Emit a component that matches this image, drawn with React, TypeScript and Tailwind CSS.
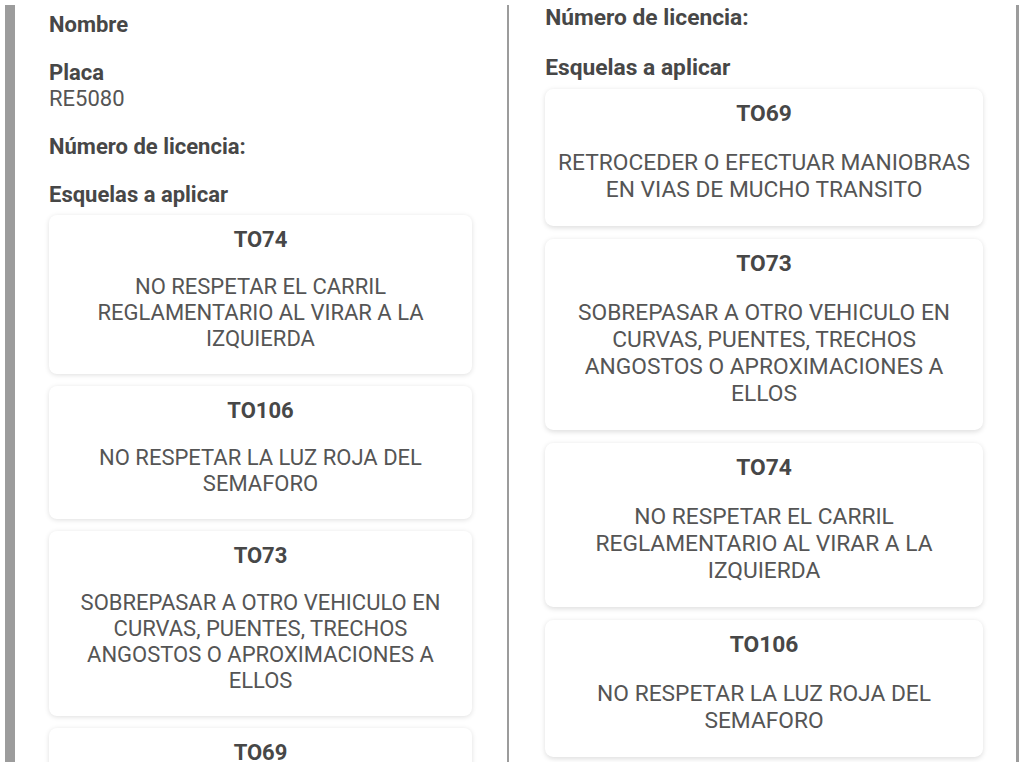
import React from "react";

type Ticket = { code: string; lines: string[] };

const T74: Ticket = { code: "TO74", lines: ["NO RESPETAR EL CARRIL", "REGLAMENTARIO AL VIRAR A LA", "IZQUIERDA"] };
const T106: Ticket = { code: "TO106", lines: ["NO RESPETAR LA LUZ ROJA DEL", "SEMAFORO"] };
const T73: Ticket = {
  code: "TO73",
  lines: ["SOBREPASAR A OTRO VEHICULO EN", "CURVAS, PUENTES, TRECHOS", "ANGOSTOS O APROXIMACIONES A", "ELLOS"],
};
const T69: Ticket = { code: "TO69", lines: ["RETROCEDER O EFECTUAR MANIOBRAS", "EN VIAS DE MUCHO TRANSITO"] };

function Field({ label, value }: { label: string; value?: string }) {
  return (
    <div className="mb-[22px]">
      <div className="font-bold text-[#474747] leading-[26px]">{label}</div>
      {value ? <div className="text-[#555555] leading-[26px]">{value}</div> : null}
    </div>
  );
}

function Card({ t }: { t: Ticket }) {
  return (
    <div className="bg-white rounded-[8px] shadow-[0_1px_5px_rgba(0,0,0,0.13)] pt-[12px] pb-[22px] px-2 text-center">
      <div className="font-bold text-[#474747] leading-[26px]">{t.code}</div>
      <div className="mt-[21px] text-[#555555] leading-[26px]">
        {t.lines.map((l, i) => (
          <span key={i} className="block whitespace-nowrap">
            {l}
          </span>
        ))}
      </div>
    </div>
  );
}

function Esquelas({ items }: { items: Ticket[] }) {
  return (
    <div>
      <div className="font-bold text-[#474747] leading-[26px] mb-[7px]">Esquelas a aplicar</div>
      <div className="flex flex-col gap-[12px]">
        {items.map((t) => (
          <Card key={t.code} t={t} />
        ))}
      </div>
    </div>
  );
}

export default function App() {
  return (
    <div className="w-[1024px] h-[768px] bg-white overflow-hidden pt-[5px] pl-[5px] font-['Roboto',sans-serif] text-[22px]">
      <div className="flex h-[757px]">
        <div className="w-[504px] shrink-0 border-l-[10px] border-r-[2px] border-[#9c9c9c] overflow-hidden pl-[34px] pr-[35px] pt-[7px]">
          <Field label="Nombre" />
          <Field label="Placa" value="RE5080" />
          <Field label="Número de licencia:" />
          <Esquelas items={[T74, T106, T73, T69]} />
        </div>
        <div className="w-[510px] shrink-0 border-r-[3px] border-[#9c9c9c] overflow-hidden">
          <div className="[zoom:1.035] pl-[35px] pr-[32px] pt-0">
            <Field label="Número de licencia:" />
            <Esquelas items={[T69, T73, T74, T106]} />
          </div>
        </div>
      </div>
    </div>
  );
}
